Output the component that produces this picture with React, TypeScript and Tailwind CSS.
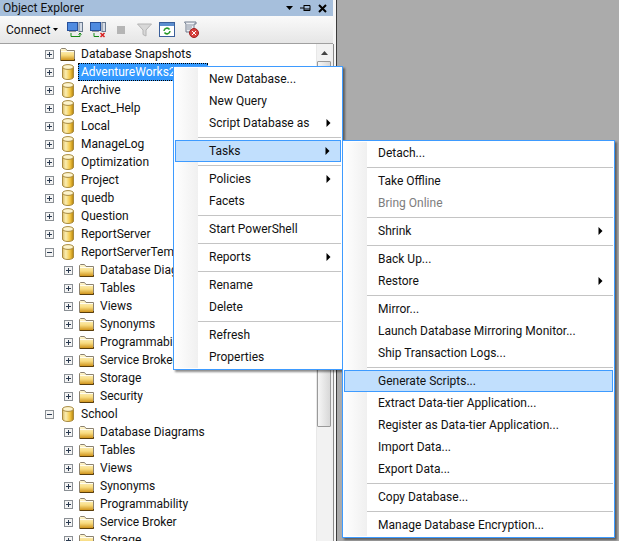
import React from "react";

const Expander = ({ open }: { open?: boolean }) => (
  <svg width="9" height="9" viewBox="0 0 9 9" className="block shrink-0">
    <rect x="0.5" y="0.5" width="8" height="8" fill="#f4f4f4" stroke="#8a8f94" />
    <path d={open ? "M2 4.5H7" : "M2 4.5H7M4.5 2V7"} stroke="#2a3a50" fill="none" />
  </svg>
);

const Cylinder = () => (
  <svg width="12" height="16" viewBox="0 0 12 16" className="block shrink-0">
    <defs>
      <linearGradient id="cyl" x1="0" x2="1" y1="0" y2="0">
        <stop offset="0" stopColor="#d8b866" />
        <stop offset="0.3" stopColor="#fbeeb0" />
        <stop offset="0.7" stopColor="#f2c440" />
        <stop offset="1" stopColor="#b0800e" />
      </linearGradient>
    </defs>
    <path d="M0.5 3V13C0.5 14.5 3 15.5 6 15.5S11.5 14.5 11.5 13V3Z" fill="url(#cyl)" stroke="#a88a40" />
    <ellipse cx="6" cy="3" rx="5.5" ry="2.4" fill="#fdf4cc" stroke="#a88a40" />
  </svg>
);

const Folder = ({ w = 15 }: { w?: number }) => (
  <svg width={w} height="13" viewBox="0 0 15 13" className="block shrink-0">
    <defs>
      <linearGradient id="fld" x1="0" x2="0" y1="0" y2="1">
        <stop offset="0" stopColor="#fff8d8" />
        <stop offset="0.55" stopColor="#f8dc80" />
        <stop offset="1" stopColor="#cc8e14" />
      </linearGradient>
    </defs>
    <path d="M0.5 12.5V1.5L1.5 0.5H5.5L7 2.5H14.5V12.5Z" fill="url(#fld)" stroke="#8c8270" />
    <path d="M1 3.5H14" stroke="#fffdf0" />
    <path d="M1 12.5H14.5V11" stroke="#5a3e0c" fill="none" />
  </svg>
);

const topRows = [
  "Archive",
  "Exact_Help",
  "Local",
  "ManageLog",
  "Optimization",
  "Project",
  "quedb",
  "Question",
  "ReportServer",
];

const kids = [
  "Database Diagrams",
  "Tables",
  "Views",
  "Synonyms",
  "Programmability",
  "Service Broker",
  "Storage",
  "Security",
];

const Db = ({ label, open, selected }: { label: string; open?: boolean; selected?: boolean }) => (
  <div className="flex h-[18px] items-center pl-[45px]">
    <Expander open={open} />
    <div className="ml-[8px]"><Cylinder /></div>
    {selected ? (
      <span className="ml-[4px] flex h-[18px] w-[130px] items-center border border-dotted border-black bg-[#3399ff] pl-[2px] text-white">
        {label}
      </span>
    ) : (
      <span className="ml-[7px] whitespace-nowrap">{label}</span>
    )}
  </div>
);

const Kid = ({ label }: { label: string }) => (
  <div className="flex h-[18px] items-center pl-[64px]">
    <Expander />
    <div className="ml-[6px]"><Folder /></div>
    <span className="ml-[6px] whitespace-nowrap">{label}</span>
  </div>
);

type Item =
  | { sep: true }
  | { label: string; arrow?: boolean; active?: boolean; disabled?: boolean; sep?: false };

const S: Item = { sep: true };

const menu1: Item[] = [
  { label: "New Database..." },
  { label: "New Query" },
  { label: "Script Database as", arrow: true },
  S,
  { label: "Tasks", arrow: true, active: true },
  S,
  { label: "Policies", arrow: true },
  { label: "Facets" },
  S,
  { label: "Start PowerShell" },
  S,
  { label: "Reports", arrow: true },
  S,
  { label: "Rename" },
  { label: "Delete" },
  S,
  { label: "Refresh" },
  { label: "Properties" },
];

const menu2: Item[] = [
  { label: "Detach..." },
  S,
  { label: "Take Offline" },
  { label: "Bring Online", disabled: true },
  S,
  { label: "Shrink", arrow: true },
  S,
  { label: "Back Up..." },
  { label: "Restore", arrow: true },
  S,
  { label: "Mirror..." },
  { label: "Launch Database Mirroring Monitor..." },
  { label: "Ship Transaction Logs..." },
  S,
  { label: "Generate Scripts...", active: true },
  { label: "Extract Data-tier Application..." },
  { label: "Register as Data-tier Application..." },
  { label: "Import Data..." },
  { label: "Export Data..." },
  S,
  { label: "Copy Database..." },
  S,
  { label: "Manage Database Encryption..." },
];

const Menu = ({ items, className, gutter }: { items: Item[]; className: string; gutter: number }) => (
  <div
    className={`absolute z-10 border border-[#3e9bff] bg-white py-[1px] shadow-[2px_2px_2px_rgba(0,0,0,0.45)] ${className}`}
  >
    <div className="relative">
      <div
        className="absolute inset-y-0 left-0 bg-gradient-to-r from-[#ffffff] to-[#f0f0f0]"
        style={{ width: gutter }}
      />
      {items.map((it, i) =>
        it.sep ? (
          <div key={i} className="relative flex h-[6px] items-center pr-[1px]" style={{ paddingLeft: gutter }}>
            <div className="h-[1px] w-full bg-[#c4c4c4]" />
          </div>
        ) : (
          <div
            key={i}
            className={`relative mx-[1px] flex h-[22px] items-center pr-[10px] ${
              it.active ? "border border-[#3e9bff] bg-[#c1dffd]" : ""
            } ${it.disabled ? "text-[#7d7d7d]" : "text-[#111]"}`}
            style={{ paddingLeft: it.active ? gutter + 9 : gutter + 10 }}
          >
            <span className="flex-1 whitespace-nowrap">{it.label}</span>
            {it.arrow && (
              <svg width="5" height="8" viewBox="0 0 5 8" className="block shrink-0">
                <path d="M0.5 0L4.5 4L0.5 8Z" fill="#000" />
              </svg>
            )}
          </div>
        )
      )}
    </div>
  </div>
);

export default function App() {
  return (
    <div className="relative flex h-[541px] w-[619px] overflow-hidden bg-[#ababab] font-['Roboto','Noto_Sans',sans-serif] text-[12px] leading-none text-[#111]">
      <div className="flex h-full w-[337px] shrink-0 flex-col overflow-hidden border-r border-[#3a3a3a] bg-[#f6f6f6]">
        <div className="mr-[3px] flex h-[16px] shrink-0 items-center justify-between bg-[#a6bfdc] pl-[3px] pr-[6px] text-[#111]">
          <span>Object Explorer</span>
          <div className="flex items-center gap-[7px]">
            <svg width="7" height="4" viewBox="0 0 7 4"><path d="M0 0H7L3.5 4Z" fill="#000" /></svg>
            <svg width="11" height="8" viewBox="0 0 11 8"><path d="M0 4H4M4 1V7M4 1.5H10V6.5H4M4 5H10" stroke="#000" fill="none" /></svg>
            <svg width="9" height="9" viewBox="0 0 9 9"><path d="M1 1L8 8M8 1L1 8" stroke="#000" strokeWidth="2" /></svg>
          </div>
        </div>
        <div className="mr-[3px] flex h-[28px] shrink-0 items-center border-b border-[#a0a0a0] bg-gradient-to-b from-[#fafafa] to-[#e6e6e6] pl-[6px]">
          <span>Connect</span>
          <svg width="5" height="3" viewBox="0 0 5 3" className="ml-[3px]"><path d="M0 0H5L2.5 3Z" fill="#000" /></svg>
          <svg width="16" height="16" viewBox="0 0 16 16" className="ml-[9px]">
            <rect x="0.5" y="0.5" width="10" height="8" fill="#4f8be0" stroke="#27509a" />
            <rect x="2" y="9" width="7" height="1" fill="#9a9a9a" />
            <rect x="12" y="0.5" width="3.5" height="9" fill="#d8dee8" stroke="#6a7a90" />
            <path d="M4 11V14.5H13V11M11.5 12.5L13 11L14.5 12.5" stroke="#148a14" fill="none" />
          </svg>
          <svg width="16" height="16" viewBox="0 0 16 16" className="ml-[7px]">
            <rect x="0.5" y="0.5" width="10" height="8" fill="#4f8be0" stroke="#27509a" />
            <rect x="2" y="9" width="7" height="1" fill="#9a9a9a" />
            <rect x="12" y="0.5" width="3.5" height="9" fill="#d8dee8" stroke="#6a7a90" />
            <path d="M4 11V14.5H9" stroke="#148a14" fill="none" />
            <path d="M10.5 11L14.5 15M14.5 11L10.5 15" stroke="#d82020" strokeWidth="1.5" />
          </svg>
          <div className="ml-[11px] h-[8px] w-[8px] bg-[#b5b5b5]" />
          <svg width="15" height="14" viewBox="0 0 15 14" className="ml-[12px]">
            <path d="M0.5 1H14.5L9 7V13L6 11.5V7Z" fill="#d8d8d8" stroke="#b4b4b4" />
          </svg>
          <svg width="16" height="15" viewBox="0 0 16 15" className="ml-[7px]">
            <rect x="0.5" y="0.5" width="15" height="14" fill="#fff" stroke="#3a5f9a" />
            <rect x="1" y="1" width="14" height="3" fill="#5c8ecf" />
            <path d="M5 9A3 3 0 0 1 10.5 7.5M11 9A3 3 0 0 1 5.5 10.5" stroke="#2a9a2a" strokeWidth="1.5" fill="none" />
          </svg>
          <svg width="17" height="17" viewBox="0 0 17 17" className="ml-[7px]">
            <path d="M2.5 1H14V3H12V11H4V3Z" fill="#eef0f4" stroke="#6e7a8c" />
            <path d="M5 4H11M5 6H10M5 8H9" stroke="#8a94a4" />
            <circle cx="12" cy="12" r="4.5" fill="#d8403c" stroke="#a02020" />
            <path d="M10 10L14 14M14 10L10 14" stroke="#fff" />
          </svg>
        </div>
        <div className="flex min-h-0 flex-1 bg-white">
          <div className="min-w-0 flex-1 overflow-hidden pt-[1px] text-[#111]">
            <div className="flex h-[18px] items-center pl-[45px]">
              <Expander />
              <div className="ml-[6px]"><Folder w={15} /></div>
              <span className="ml-[6px] whitespace-nowrap">Database Snapshots</span>
            </div>
            <Db label="AdventureWorks2012" selected />
            {topRows.map((r) => <Db key={r} label={r} />)}
            <Db label="ReportServerTempDB" open />
            {kids.map((k) => <Kid key={k} label={k} />)}
            <Db label="School" open />
            {kids.slice(0, 7).map((k) => <Kid key={"s" + k} label={k} />)}
          </div>
          <div className="flex w-[15px] shrink-0 flex-col border-l border-[#e8e8e8] bg-[#f2f2f2]">
            <div className="flex h-[17px] shrink-0 items-center justify-center">
              <svg width="7" height="4" viewBox="0 0 7 4"><path d="M0 4H7L3.5 0Z" fill="#444" /></svg>
            </div>
            <div className="h-[366px] shrink-0 rounded-[1px] border border-[#9a9a9a] bg-gradient-to-r from-[#f6f6f6] to-[#d8d8d8]" />
          </div>
          <div className="w-[5px] shrink-0 border-l-2 border-[#f0f0f0] bg-[#f6f6f6]">
            <div className="h-full w-[1px] bg-[#8a8a8a]" />
          </div>
        </div>
      </div>
      <Menu items={menu1} gutter={24} className="left-[173px] top-[66px] w-[170px]" />
      <Menu items={menu2} gutter={24} className="left-[342px] top-[140px] w-[273px]" />
    </div>
  );
}
